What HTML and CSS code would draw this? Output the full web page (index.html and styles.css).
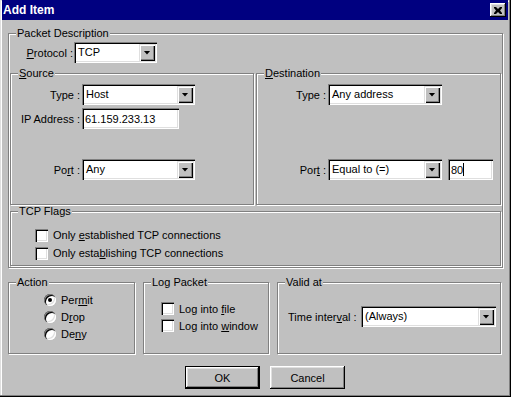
FILE: index.html
```html
<!DOCTYPE html>
<html lang="en">
<head>
<meta charset="UTF-8">
<title>Add Item</title>
<link rel="stylesheet" href="styles.css">
</head>
<body>

<div class="window">
  <div class="titlebar">
    <span class="title">Add Item</span>
    <span class="close-btn">
      <svg width="8" height="7" viewBox="0 0 8 7"><path d="M0 0h2l2 2 2-2h2v1L6 3.5 8 6v1H6L4 5 2 7H0V6l2-2.5L0 1z" fill="#000"/></svg>
    </span>
  </div>

  <div class="client">
    <fieldset class="group packet">
      <legend>Packet Description</legend>
      <div class="proto-row">
        <span class="proto-lbl"><u>P</u>rotocol :</span>
        <div class="combo proto-combo"><span class="combo-text">TCP</span><span class="combo-btn"></span></div>
      </div>

      <div class="addr-row">
        <fieldset class="group addr source">
          <legend><u>S</u>ource</legend>
          <div class="field-row">
            <span class="addr-lbl">Type :</span>
            <div class="combo addr-combo"><span class="combo-text">Host</span><span class="combo-btn"></span></div>
          </div>
          <div class="field-row">
            <span class="addr-lbl">IP Address :</span>
            <div class="edit ip-edit">61.159.233.13</div>
          </div>
          <div class="field-row port-row">
            <span class="addr-lbl">Po<u>r</u>t :</span>
            <div class="combo addr-combo"><span class="combo-text">Any</span><span class="combo-btn"></span></div>
          </div>
        </fieldset>

        <fieldset class="group addr dest">
          <legend><u>D</u>estination</legend>
          <div class="field-row">
            <span class="addr-lbl">Type :</span>
            <div class="combo addr-combo"><span class="combo-text">Any address</span><span class="combo-btn"></span></div>
          </div>
          <div class="field-row port-row">
            <span class="addr-lbl">Por<u>t</u> :</span>
            <div class="combo addr-combo"><span class="combo-text">Equal to (=)</span><span class="combo-btn"></span></div>
            <div class="edit port-edit">80<span class="caret"></span></div>
          </div>
        </fieldset>
      </div>

      <fieldset class="group flags">
        <legend>TCP Flags</legend>
        <div class="check-row flag-row"><span class="check"></span><span>Only <u>e</u>stablished TCP connections</span></div>
        <div class="check-row flag-row"><span class="check"></span><span>Only esta<u>b</u>lishing TCP connections</span></div>
      </fieldset>
    </fieldset>

    <div class="lower-row">
      <fieldset class="group action">
        <legend>Action</legend>
        <div class="check-row radio-row"><span class="radio checked"></span><span>Per<u>m</u>it</span></div>
        <div class="check-row radio-row"><span class="radio"></span><span>D<u>r</u>op</span></div>
        <div class="check-row radio-row"><span class="radio"></span><span>De<u>n</u>y</span></div>
      </fieldset>

      <fieldset class="group log">
        <legend>Log Packet</legend>
        <div class="check-row log-row"><span class="check"></span><span>Log into <u>f</u>ile</span></div>
        <div class="check-row log-row"><span class="check"></span><span>Log into <u>w</u>indow</span></div>
      </fieldset>

      <fieldset class="group valid">
        <legend>Valid at</legend>
        <div class="time-row">
          <span class="time-lbl">Time inter<u>v</u>al :</span>
          <div class="combo time-combo"><span class="combo-text">(Always)</span><span class="combo-btn"></span></div>
        </div>
      </fieldset>
    </div>

    <div class="btn-group">
      <div class="btn default">OK</div>
      <div class="btn">Cancel</div>
    </div>
  </div>
</div>

</body>
</html>
```

FILE: styles.css
```css
body {
  margin: 0;
  font-family: "Liberation Sans", Arial, sans-serif;
  font-size: 11px;
  color: #000;
  background-color: #c0c0c0;
}
.window {
  width: 511px;
  height: 397px;
  background-color: #c0c0c0;
  box-shadow: inset -1px -1px #000, inset -2px -2px #808080, inset 1px 1px #dfdfdf, inset 2px 2px #fff;
}
.titlebar {
  display: flex;
  align-items: center;
  justify-content: space-between;
  height: 20px;
  margin: 0 3px 0 2px;
  padding: 0 2px 0 1px;
  background-color: #000080;
}
.title {
  color: #fff;
  font-weight: bold;
  font-size: 12px;
}
.close-btn {
  display: flex;
  align-items: center;
  justify-content: center;
  width: 16px;
  height: 14px;
  background-color: #c0c0c0;
  box-shadow: inset -1px -1px #000, inset 1px 1px #fff, inset -2px -2px #808080, inset 2px 2px #dfdfdf;
}
.client {
  padding: 7px 8px 0 8px;
}

/* group boxes */
.group {
  margin: 0;
  padding: 0;
  min-width: 0;
  border: 1px solid #808080;
  box-shadow: 1px 1px #fff, inset 1px 1px #fff;
}
.group legend {
  margin-left: 7px;
  padding: 0 1px;
  line-height: 13px;
  background-color: #c0c0c0;
}
.packet {
  width: 495px;
  box-sizing: border-box;
}
.proto-row {
  display: flex;
  align-items: center;
  margin-top: 2px;
}
.proto-lbl {
  width: 64px;
  margin-right: 1px;
  text-align: right;
}
.proto-combo {
  width: 83px;
}
.addr-row {
  display: flex;
  gap: 2px;
  margin: 4px 1px 0 1px;
}
.addr {
  box-sizing: border-box;
  padding: 4px 0 24px 0;
}
.source {
  width: 244px;
}
.dest {
  width: 245px;
}
.field-row {
  display: flex;
  align-items: center;
  margin-top: 3px;
}
.field-row:first-of-type {
  margin-top: 0;
}
.source .port-row {
  margin-top: 30px;
}
.dest .port-row {
  margin-top: 54px;
}
.addr-lbl {
  width: 69px;
  margin-right: 2px;
  text-align: right;
}
.addr-combo {
  width: 113px;
}
.dest .addr-combo {
  width: 114px;
}

/* sunken fields */
.combo,
.edit {
  display: flex;
  height: 21px;
  box-sizing: border-box;
  padding: 2px;
  background-color: #fff;
  box-shadow: inset 1px 1px #808080, inset 2px 2px #000, inset -1px -1px #fff, inset -2px -2px #dfdfdf;
}
.combo-text {
  flex: 1;
  padding-left: 2px;
  line-height: 17px;
  white-space: nowrap;
}
.combo-btn {
  display: flex;
  align-items: center;
  justify-content: center;
  width: 16px;
  background-color: #c0c0c0;
  box-shadow: inset 1px 1px #dfdfdf, inset 2px 2px #fff, inset -1px -1px #000, inset -2px -2px #808080;
}
.combo-btn::after {
  content: "";
  width: 7px;
  height: 4px;
  background-color: #000;
  clip-path: polygon(0 0, 100% 0, 50% 100%);
}
.edit {
  align-items: center;
  padding-left: 3px;
}
.ip-edit {
  width: 97px;
}
.port-edit {
  width: 45px;
  margin-left: 6px;
}
.caret {
  width: 1px;
  height: 13px;
  background-color: #000;
}

/* tcp flags */
.flags {
  margin: 0 1px 1px 1px;
  padding: 8px 0 3px 0;
}
.check-row {
  display: flex;
  align-items: center;
}
.flag-row {
  height: 18px;
  padding-left: 24px;
}
.check {
  width: 13px;
  height: 13px;
  margin-right: 5px;
  box-sizing: border-box;
  background-color: #fff;
  box-shadow: inset 1px 1px #808080, inset 2px 2px #000, inset -1px -1px #fff, inset -2px -2px #dfdfdf;
}
.radio {
  position: relative;
  width: 12px;
  height: 12px;
  margin-right: 5px;
  border-radius: 50%;
  background-color: #fff;
  box-shadow: inset 1px 1px #808080, inset 2px 2px #000, inset -1px -1px #fff, inset -2px -2px #dfdfdf;
}
.radio.checked::after {
  content: "";
  position: absolute;
  left: 4px;
  top: 4px;
  width: 4px;
  height: 4px;
  border-radius: 50%;
  background-color: #000;
}

/* lower groups */
.lower-row {
  display: flex;
  gap: 8px;
  margin-top: 8px;
}
.action {
  width: 127px;
  box-sizing: border-box;
  padding: 2px 0 11px 0;
}
.radio-row {
  height: 17px;
  padding-left: 35px;
}
.log {
  width: 126px;
  box-sizing: border-box;
  padding: 11px 0 0 0;
}
.log-row {
  height: 17px;
  padding-left: 17px;
}
.valid {
  width: 224px;
  box-sizing: border-box;
  padding: 17px 0 0 0;
}
.time-row {
  display: flex;
  align-items: center;
  padding: 0 4px 0 10px;
}
.time-lbl {
  flex: 1;
}
.time-combo {
  width: 135px;
}

/* buttons */
.btn-group {
  display: flex;
  gap: 10px;
  margin: 12px 0 0 177px;
}
.btn {
  display: flex;
  align-items: center;
  justify-content: center;
  width: 75px;
  height: 23px;
  box-sizing: border-box;
  background-color: #c0c0c0;
  box-shadow: inset -1px -1px #000, inset 1px 1px #fff, inset -2px -2px #808080, inset 2px 2px #dfdfdf;
}
.btn.default {
  border: 1px solid #000;
}
```
